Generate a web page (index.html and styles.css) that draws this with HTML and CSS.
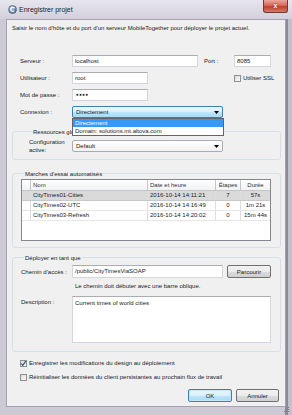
FILE: index.html
```html
<!DOCTYPE html>
<html lang="fr">
<head>
  <meta charset="UTF-8" />
  <meta name="viewport" content="width=device-width, initial-scale=1" />
  <title>Enregistrer projet</title>
  <link rel="stylesheet" href="styles.css">
</head>
<body>
  <div class="window">
    <div class="titlebar">
      <svg class="app-icon" width="9" height="9" viewBox="0 0 9 9">
        <defs>
          <radialGradient id="ig" cx="35%" cy="30%" r="75%">
            <stop offset="0" stop-color="#b9cde3" />
            <stop offset="1" stop-color="#3e6690" />
          </radialGradient>
        </defs>
        <circle cx="4.5" cy="4.5" r="4" fill="url(#ig)" stroke="#4c5c70" stroke-width="0.6" />
        <path d="M6.2 3 A2 2 0 1 0 6.3 5.6" fill="none" stroke="#fff" stroke-width="1.1" />
        <path d="M5 2 L7 2.6 L6 4 Z" fill="#fff" />
      </svg>
      <span class="title">Enregistrer projet</span>
      <button class="close-btn" aria-label="Fermer">x</button>
    </div>

    <div class="client">
      <p class="intro">Saisir le nom d'hôte et du port d'un serveur MobileTogether pour déployer le projet actuel.</p>

      <div class="server-form">
        <div class="row">
          <span class="lbl">Serveur :</span>
          <span class="field server">localhost</span>
          <span class="lbl-port">Port :</span>
          <span class="field port">8085</span>
        </div>
        <div class="row">
          <span class="lbl">Utilisateur :</span>
          <span class="field short">root</span>
          <span class="ssl"><span class="check"></span>Utiliser SSL</span>
        </div>
        <div class="row">
          <span class="lbl">Mot de passe :</span>
          <span class="field short dots">●●●●</span>
        </div>
        <div class="row">
          <span class="lbl">Connexion :</span>
          <div class="combo focused">
            <span>Directement</span>
            <svg class="arrow" width="5" height="3" viewBox="0 0 5 3"><path d="M0 0 H5 L2.5 3 Z" fill="#000" /></svg>
            <ul class="combo-list">
              <li class="sel">Directement</li>
              <li>Domain: solutions.mt.altova.com</li>
            </ul>
          </div>
        </div>
      </div>

      <div class="group res">
        <div class="group-title clipped">Ressources globales</div>
        <div class="row tall">
          <span class="lbl-config">Configuration active:</span>
          <div class="combo">
            <span>Default</span>
            <svg class="arrow" width="5" height="3" viewBox="0 0 5 3"><path d="M0 0 H5 L2.5 3 Z" fill="#000" /></svg>
          </div>
        </div>
      </div>

      <div class="group runs-group">
        <div class="group-title">Marches d'essai automatisés</div>
        <div class="runs">
          <div class="runs-head">
            <span></span>
            <span>Nom</span>
            <span>Date et heure</span>
            <span class="c">Étapes</span>
            <span class="c">Durée</span>
          </div>
          <div class="runs-row selected">
            <span></span>
            <span>CityTimes01-Cities</span>
            <span>2016-10-14 14:11:21</span>
            <span class="c">7</span>
            <span class="c">57s</span>
          </div>
          <div class="runs-row">
            <span></span>
            <span>CityTimes02-UTC</span>
            <span>2016-10-14 14:16:49</span>
            <span class="c">0</span>
            <span class="c">1m 21s</span>
          </div>
          <div class="runs-row">
            <span></span>
            <span>CityTimes03-Refresh</span>
            <span>2016-10-14 14:20:02</span>
            <span class="c">0</span>
            <span class="c">15m 44s</span>
          </div>
        </div>
      </div>

      <div class="group deploy">
        <div class="group-title">Déployer en tant que</div>
        <div class="row path-row">
          <span class="lbl-deploy">Chemin d'accès :</span>
          <span class="field path">/public/CityTimesViaSOAP</span>
          <button class="btn browse">Parcourir</button>
        </div>
        <p class="hint">Le chemin doit débuter avec une barre oblique.</p>
        <div class="row desc-row">
          <span class="lbl-deploy">Description :</span>
          <span class="field desc">Current times of world cities</span>
        </div>
      </div>

      <div class="options">
        <div class="opt">
          <span class="check">
            <svg width="7" height="7" viewBox="0 0 7 7"><path d="M1.3 3.6 L2.8 5.3 L5.8 1.2" fill="none" stroke="#2a4a94" stroke-width="1.2" /></svg>
          </span>
          Enregistrer les modifications du design au déploiement
        </div>
        <div class="opt">
          <span class="check"></span>
          Réinitialiser les données du client persistantes au prochain flux de travail
        </div>
      </div>

      <div class="actions">
        <button class="btn ok">OK</button>
        <button class="btn cancel">Annuler</button>
      </div>
    </div>

    <svg class="grip" width="7" height="7" viewBox="0 0 7 7">
      <rect x="5" y="1" width="1" height="1" fill="#7d7888" />
      <rect x="3" y="3" width="1" height="1" fill="#7d7888" />
      <rect x="5" y="3" width="1" height="1" fill="#7d7888" />
      <rect x="1" y="5" width="1" height="1" fill="#7d7888" />
      <rect x="3" y="5" width="1" height="1" fill="#7d7888" />
      <rect x="5" y="5" width="1" height="1" fill="#7d7888" />
    </svg>
  </div>
</body>
</html>
```

FILE: styles.css
```css
* {
  box-sizing: border-box;
}
html, body {
  margin: 0;
}
body {
  width: 292px;
  height: 415px;
  overflow: hidden;
  font-family: 'Liberation Sans', Arial, sans-serif;
  font-size: 6px;
  color: #1a1a1a;
}
p, ul {
  margin: 0;
  padding: 0;
}

/* cadre de la fenêtre */
.window {
  position: relative;
  height: 415px;
  display: flex;
  flex-direction: column;
  padding-bottom: 8px;
  background: linear-gradient(to right, #cdc9d5 0, #cdc9d5 285px, #8e889b 285px, #8e889b 288px, #c4bfcc 288px);
}
.titlebar {
  height: 19px;
  flex: none;
  display: flex;
  align-items: center;
  padding-left: 8px;
  background: linear-gradient(#e7e5ed, #d3d0dc);
}
.app-icon {
  margin-right: 2px;
}
.title {
  font-size: 7px;
  color: #222;
}
.close-btn {
  align-self: flex-start;
  margin-left: auto;
  margin-right: 4px;
  width: 25px;
  height: 13px;
  padding: 0 0 1px 0;
  border: 1px solid #6b3a3a;
  border-top: none;
  border-radius: 0 0 3px 3px;
  background: linear-gradient(#e9a89b 0%, #d66a5c 45%, #c2402f 55%, #d67a66 100%);
  color: #fff;
  font-family: 'Liberation Sans', Arial, sans-serif;
  font-size: 7px;
  font-weight: bold;
  line-height: 11px;
  text-shadow: 0 0 2px #5a1a10;
}
.grip {
  position: absolute;
  right: 2px;
  bottom: 2px;
}

.client {
  flex: 1;
  display: flex;
  flex-direction: column;
  margin: 0 6px;
  background: #f0f0f0;
  border: 1px solid #a5a1b0;
}
.intro {
  margin: 4px 0 0 5px;
  line-height: 8px;
}

/* champs */
.server-form {
  margin-top: 23px;
  padding-left: 13px;
  display: flex;
  flex-direction: column;
  gap: 5px;
}
.row {
  display: flex;
  align-items: center;
  height: 12px;
}
.lbl {
  width: 52px;
}
.lbl-port {
  width: 30px;
  margin-left: 6px;
}
.field {
  display: block;
  height: 12px;
  padding: 0 2px;
  line-height: 10px;
  background: #fff;
  border: 1px solid #d3d6dc;
  border-top-color: #abadb3;
  white-space: nowrap;
}
.field.server {
  width: 126px;
}
.field.port {
  width: 37px;
}
.field.short {
  width: 76px;
}
.field.dots {
  font-size: 4.6px;
  letter-spacing: 0.4px;
  padding-left: 3px;
}
.ssl {
  display: flex;
  align-items: center;
  gap: 2px;
  margin-left: 86px;
}
.check {
  display: inline-block;
  width: 7px;
  height: 7px;
  flex: none;
  border: 1px solid #8e8f8f;
  background: linear-gradient(135deg, #dcdcdc, #fafafa);
  position: relative;
}
.check svg {
  position: absolute;
  left: -1px;
  top: -1px;
}

.combo {
  position: relative;
  display: flex;
  align-items: center;
  justify-content: space-between;
  width: 151px;
  height: 12px;
  padding: 0 3px 0 3px;
  border: 1px solid #a9acb2;
  border-radius: 2px;
  background: linear-gradient(#ffffff, #f1f1f1);
}
.combo.focused {
  border-color: #3c7fb1;
  background: linear-gradient(#eaf6fd 0%, #d9f0fc 50%, #bee6fd 51%, #a7d9f5 100%);
}
.combo-list {
  position: absolute;
  top: 11px;
  left: -1px;
  width: 152px;
  z-index: 5;
  list-style: none;
  background: #fff;
  border: 1px solid #646464;
}
.combo-list li {
  height: 8px;
  line-height: 8px;
  padding-left: 2px;
}
.combo-list li.sel {
  background: #3399ff;
  color: #fff;
}

/* cadres de groupe */
.group {
  margin: 13px 4px 0 5px;
  border: 1px solid #d5dfe5;
  border-radius: 3px;
}
.group-title {
  width: max-content;
  margin: -4px 0 0 3px;
  padding: 0 1px;
  line-height: 8px;
  background: #f0f0f0;
}
.group-title.clipped {
  max-width: 54px;
  overflow: hidden;
  white-space: nowrap;
}
.res {
  padding: 0 0 5px 16px;
}
.row.tall {
  height: 16px;
  margin-top: 2px;
}
.lbl-config {
  width: 43px;
  line-height: 8px;
}

.runs-group {
  padding: 0 0 6px 8px;
}
.runs {
  width: 250px;
  height: 62px;
  margin-top: 1px;
  background: #fff;
  border: 1px solid #828790;
}
.runs-head, .runs-row {
  display: grid;
  grid-template-columns: 9px 117px 68px 25px 29px;
}
.runs-head {
  height: 11px;
  background: linear-gradient(#ffffff, #f1f2f4);
  border-bottom: 1px solid #c5c5c5;
}
.runs-head span {
  line-height: 10px;
  padding-left: 2px;
  border-right: 1px solid #c5c5c5;
  color: #333;
}
.runs-row {
  height: 10px;
  border-bottom: 1px solid #e6e6e6;
}
.runs-row span {
  line-height: 9px;
  padding-left: 2px;
  border-right: 1px solid #dedede;
  white-space: nowrap;
}
.runs-head span:last-child, .runs-row span:last-child {
  border-right: none;
}
.runs-head .c, .runs-row .c {
  text-align: center;
  padding-left: 0;
}
.runs-row.selected {
  background: #dadada;
  border-bottom-color: #c8c8c8;
}

.deploy {
  margin-top: 9px;
  padding: 0 0 8px 8px;
}
.path-row {
  height: 13px;
  margin-top: 3px;
}
.lbl-deploy {
  width: 51px;
}
.field.path {
  width: 151px;
  height: 13px;
  line-height: 11px;
}
.hint {
  margin: 4px 0 0 54px;
  line-height: 8px;
}
.desc-row {
  height: 47px;
  align-items: flex-start;
  margin-top: 6px;
}
.desc-row .lbl-deploy {
  padding-top: 3px;
}
.field.desc {
  width: 199px;
  height: 47px;
  padding-top: 1px;
}

.options {
  padding-left: 13px;
}
.opt {
  display: flex;
  align-items: center;
  gap: 2px;
  height: 8px;
  margin-top: 7px;
}
.opt + .opt {
  margin-top: 6px;
}

/* boutons */
.btn {
  height: 13px;
  padding: 0;
  font-family: 'Liberation Sans', Arial, sans-serif;
  font-size: 6px;
  color: #1a1a1a;
  border: 1px solid #707070;
  border-radius: 2px;
  background: linear-gradient(#f2f2f2 0%, #ebebeb 50%, #dddddd 51%, #cfcfcf 100%);
}
.browse {
  width: 44px;
  margin-left: 4px;
}
.actions {
  display: flex;
  justify-content: flex-end;
  gap: 4px;
  margin-top: 8px;
  padding-right: 6px;
}
.ok {
  width: 44px;
  border-color: #3c7fb1;
  background: linear-gradient(#eaf6fd 0%, #d9f0fc 50%, #bee6fd 51%, #a7d9f5 100%);
  box-shadow: inset 0 0 0 1px #c4e5f6;
}
.cancel {
  width: 43px;
}
```
